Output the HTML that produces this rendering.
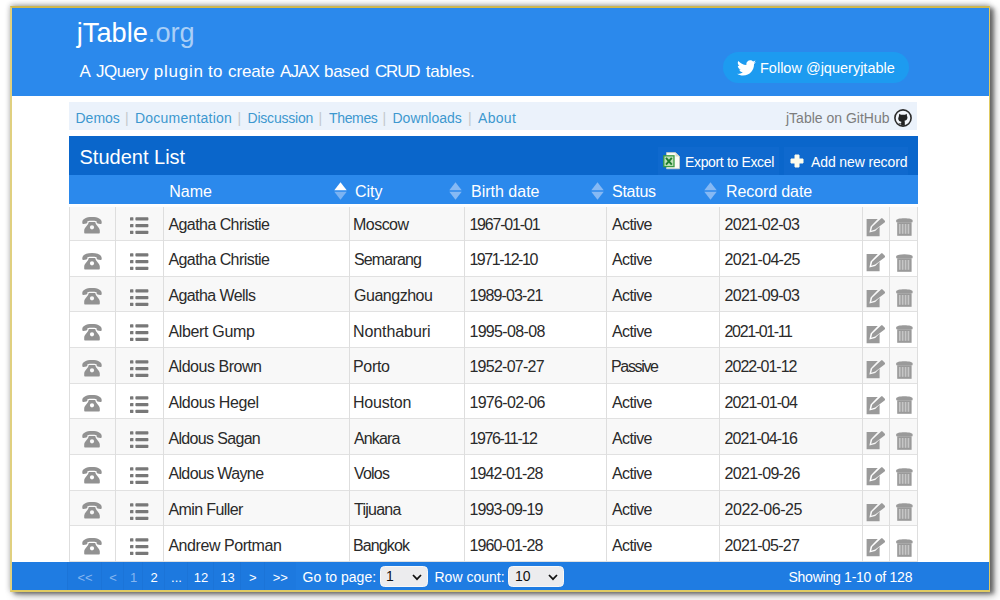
<!DOCTYPE html>
<html><head><meta charset="utf-8"><title>jTable.org</title>
<style>
*{box-sizing:border-box;margin:0;padding:0}
html,body{width:1000px;height:600px;overflow:hidden;background:#fff}
body{font-family:"Liberation Sans",sans-serif;position:relative}
#frame{position:absolute;left:10px;top:6px;width:980px;height:586px;border:2px solid #e0cb62;border-right-width:1px;border-top-color:#cdb750;border-left-color:#e0d080;background:#fff;box-shadow:4px 2px 4px rgba(0,0,0,.42),5px 4px 9px rgba(0,0,0,.25),0 -2px 5px rgba(0,0,0,.16),0 0 6px rgba(0,0,0,.14)}
#hdr{position:absolute;left:12px;top:8px;width:977px;height:88.1px;background:#2b89ec}
#logo{position:absolute;left:76.8px;top:16px;font-size:27.2px;line-height:34px;color:#fff;white-space:nowrap}
#logo span{color:#a9cff7}
#sub{position:absolute;left:0;top:61.3px;font-size:17px;line-height:22px;color:#fff;white-space:nowrap}
#sub span{position:absolute;top:0}
#tw{position:absolute;left:723px;top:52px;width:186px;height:31px;border-radius:16px;background:#1d9bf0}
#tw span{position:absolute;left:37px;top:6.8px;font-size:14.5px;line-height:18px;color:#fff;white-space:nowrap}
#tw svg{position:absolute;left:14px;top:8px}
#nav{position:absolute;left:69px;top:102px;width:848px;height:28.4px;background:#ebf2fb}
#nav a,#nav i,#nav b{position:absolute;top:7.1px;font-size:14px;line-height:18px;font-style:normal;font-weight:normal;white-space:nowrap}
#nav a{color:#3d98cf;text-decoration:none}
#nav i{color:#c4c8cc}
#nav b{color:#7d7d7d}
#tbl{position:absolute;left:69px;top:137px;width:848.5px;height:425px}
#tt{position:absolute;left:0;top:-.7px;width:100%;height:38.6px;background:#0a66cb}
#tt h1{position:absolute;left:10.5px;top:8.1px;font-size:20px;line-height:26px;font-weight:normal;color:#fff;white-space:nowrap}
.tb{position:absolute;top:10.7px;height:27.9px;background:#0f69ce}
.tb span{position:absolute;top:6.3px;font-size:14px;line-height:18px;color:#fff;white-space:nowrap}
#th{position:absolute;left:0;top:37.9px;width:100%;height:29.6px;background:#2b89ec}
#th span{position:absolute;top:6.8px;font-size:16px;line-height:20px;color:#fff;white-space:nowrap}
#th svg{position:absolute;top:6.8px}
.row{position:absolute;left:0;width:100%;height:35.65px;background:#fff;border-bottom:1px solid #e1e1e1}
.row.odd{background:#f8f8f8}
.c{position:absolute;top:9.3px;font-size:16px;line-height:20px;color:#2a2a2a;white-space:nowrap}
.c1{left:99px}.c2{left:284.5px}.c3{left:401px}.c4{left:542px}.c5{left:655px}
.ic{position:absolute}
.i1{left:13.2px;top:11.6px}.i2{left:61.2px;top:12px}.i3{left:796.7px;top:12.2px}.i4{left:826.6px;top:12.6px}
.vl{position:absolute;top:67.5px;width:1px;height:357px;background:#dedede}
#ft{position:absolute;left:12px;top:561.6px;width:977px;height:28.4px;background:#1f7ce2}
#ft span,#ft b{position:absolute;top:6.6px;font-size:14px;line-height:18px;font-weight:normal;color:#fff;white-space:nowrap}
#ft b{top:0;height:28.4px;background:#1d79df;box-shadow:-1px 0 0 #1b74d8;text-align:center;line-height:31.8px;font-size:13px;overflow:hidden}
#ft b.d{color:#86b6f0}
.sel{position:absolute;top:4.8px;height:21px;border-radius:4.5px;background:#ececee;border:1px solid #f8f8f8}
.sel em{position:absolute;left:6px;top:1px;font-style:normal;font-size:14px;line-height:17px;color:#111}
.sel svg{position:absolute;right:5px;top:6.2px}
</style></head><body>
<svg width="0" height="0" style="position:absolute"><defs>
<symbol id="ph" viewBox="0 0 20 17"><path fill="#929292" fill-rule="evenodd" d="M.3 5.200C.3 2 4 0 10 0s9.700 2 9.700 5.200V6c0 .8-.5 1.200-1.300 1l-2.800-.6c-.6-.2-1-.6-1-1.200v-1C13 3.800 11.600 3.700 10 3.700S7 3.800 5.400 4.200v1c0 .6-.4 1-1 1.200L1.600 7C.8 7.200.3 6.800.3 6zM6.800 5.100h6.400c.4 3 4.400 5.400 4.600 8.400v1.900c0 .6-.4 1-1 1H3.200c-.6 0-1-.4-1-1v-1.900c.2-3 4.200-5.400 4.600-8.400zM10 8.200a2.100 2.100 0 0 0 0 4.200 2.100 2.100 0 0 0 0-4.200z"/></symbol>
<symbol id="li" viewBox="0 0 19 17"><g fill="#787878"><rect x="0" y=".3" width="3.400" height="3.300" rx=".4"/><rect x="5.400" y=".3" width="13" height="3.300" rx=".8"/><rect x="0" y="7" width="3.400" height="3.300" rx=".4"/><rect x="5.400" y="7" width="13" height="3.300" rx=".8"/><rect x="0" y="13.700" width="3.400" height="3.300" rx=".4"/><rect x="5.400" y="13.700" width="13" height="3.300" rx=".8"/></g></symbol>
<symbol id="ed" viewBox="0 0 20 19"><path fill="#9a9a9a" d="M0.6 1L11.8 1 4.6 8.6 3.4 14.4 9.2 13 13.6 8.4 13.6 18.2 0.6 18.2Z"/><path fill="#9a9a9a" d="M14.8 0.8C15.4 0.2 16.2 0.2 16.8 0.8L18.6 2.6C19.2 3.2 19.2 4 18.6 4.6L9.2 11.6 5.2 12.8 6.2 8.8Z"/></symbol>
<symbol id="de" viewBox="0 0 18 18"><path fill="#9a9a9a" d="M.2 4.200V2.400C.2 1.200 3.700.3 8.400.3s8.200.9 8.200 2.100v1.800z"/><rect x="1.200" y="4.200" width="14.400" height="13.600" fill="#9a9a9a"/><g fill="#c6c6c6"><rect x="2.900" y="6" width="1.700" height="9.800"/><rect x="5.800" y="6" width="1.700" height="9.800"/><rect x="8.700" y="6" width="1.700" height="9.800"/><rect x="11.600" y="6" width="1.700" height="9.800"/></g></symbol>
<symbol id="so" viewBox="0 0 13 18"><path fill="#86b9f4" d="M6.500 0.300L12.700 8.300 0.300 8.300Z"/><path fill="#86b9f4" d="M6.500 17.700L12.700 9.700 0.300 9.700Z"/></symbol>
<symbol id="sa" viewBox="0 0 13 18"><path fill="#fff" d="M6.500 0.300L12.700 8.300 0.300 8.300Z"/><path fill="#7cb3f2" d="M6.500 17.700L12.700 9.700 0.300 9.700Z"/></symbol>
</defs></svg>
<div id="frame"></div>
<div id="hdr"></div>
<div id="logo">jTable<span>.org</span></div>
<div id="sub"><span style="left:79.6px;letter-spacing:-0.80px">A</span><span style="left:96.0px;letter-spacing:-0.46px">JQuery</span><span style="left:153.8px;letter-spacing:0.76px">plugin</span><span style="left:208.0px;letter-spacing:0.28px">to</span><span style="left:228.0px;letter-spacing:-0.12px">create</span><span style="left:280.0px;letter-spacing:-0.93px">AJAX</span><span style="left:324.0px;letter-spacing:-0.29px">based</span><span style="left:375.0px;letter-spacing:-1.21px">CRUD</span><span style="left:425.8px;letter-spacing:-0.19px">tables.</span></div>
<div id="tw"><svg width="19" height="16" viewBox="0 0 24 20"><path fill="#fff" d="M24 2.4c-.9.4-1.8.7-2.8.8 1-.6 1.800-1.600 2.200-2.700-1 .6-2 1-3.100 1.200C19.400.7 18.100.1 16.700.1c-2.700 0-4.900 2.200-4.900 4.900 0 .4 0 .8.100 1.100C7.700 5.900 4.100 4 1.700 1 1.200 1.800 1 2.600 1 3.500c0 1.700.9 3.200 2.200 4.100-.8 0-1.600-.2-2.200-.6v.1c0 2.400 1.700 4.400 3.900 4.800-.4.100-.8.200-1.300.2-.3 0-.6 0-.9-.1.600 2 2.400 3.400 4.600 3.400-1.700 1.300-3.800 2.100-6.100 2.100-.4 0-.8 0-1.200-.1 2.200 1.400 4.800 2.200 7.500 2.200 9.100 0 14-7.500 14-14v-.6c1-.7 1.800-1.600 2.500-2.600z"/></svg><span>Follow @jqueryjtable</span></div>
<div id="nav">
<a style="left:6.5px">Demos</a><i style="left:56px">|</i>
<a style="left:66px;letter-spacing:.22px">Documentation</a><i style="left:168.5px">|</i>
<a style="left:178.5px;letter-spacing:-.2px">Discussion</a><i style="left:249.500px">|</i>
<a style="left:260px;letter-spacing:-.35px">Themes</a><i style="left:313.500px">|</i>
<a style="left:323.5px">Downloads</a><i style="left:399px">|</i>
<a style="left:409px;letter-spacing:.3px">About</a>
<b style="left:717px">jTable on GitHub</b>
<svg style="position:absolute;left:825px;top:6.8px" width="18" height="18" viewBox="-9 -9 18 18"><circle r="8.100" fill="#f3f6fb" stroke="#2b2b2b" stroke-width="1.600"/><path fill="#222" d="M-3.700-4.300l1.600 1.100h4.200l1.600-1.100.3 2.400c.6.900.6 2 .1 3-.5 1.100-1.500 1.600-2.600 1.700l.3 1v3.600h-3.600v-1.200c-1.600.4-2.300-.4-2.700-1.400.9.800 1.800 1 2.700.4l.1-1.400c-1.200-.1-2.200-.6-2.700-1.700-.5-1-.5-2.100.100-3z"/></svg>
</div>
<div id="tbl">
<div id="tt"><h1>Student List</h1>
<div class="tb" style="left:588.5px;width:121px"><svg style="position:absolute;left:5px;top:5px" width="18" height="18" viewBox="0 0 18 18"><path fill="#fbfbf4" stroke="#d2d0bb" stroke-width=".7" d="M3.500.6h9l4 4v12.200H3.500z"/><path fill="#dcdac6" d="M12.500.6l4 4h-4z"/><rect x=".8" y="3.800" width="10.200" height="10.800" fill="#bfe0b8" stroke="#3a9a43" stroke-width="1.300"/><path stroke="#1f7d2f" stroke-width="1.900" d="M3 5.800l5.800 6.800M8.800 5.800L3 12.600"/></svg><span style="left:27.5px;letter-spacing:-.35px">Export to Excel</span></div>
<div class="tb" style="left:715px;width:123.500px"><svg style="position:absolute;left:6.300px;top:7.300px" width="14" height="14" viewBox="0 0 14 14"><path fill="#fdfcec" stroke="#fdfcec" stroke-width="1" stroke-linejoin="round" d="M5 1h4v4h4v4H9v4H5V9H1V5h4z"/></svg><span style="left:27px;letter-spacing:-.12px">Add new record</span></div>
</div>
<div id="th">
<span style="left:100.3px">Name</span><svg style="left:264.5px" width="13" height="18"><use href="#sa"/></svg>
<span style="left:286px">City</span><svg style="left:379.5px" width="13" height="18"><use href="#so"/></svg>
<span style="left:402px">Birth date</span><svg style="left:522px" width="13" height="18"><use href="#so"/></svg>
<span style="left:543px;letter-spacing:-.25px">Status</span><svg style="left:634.5px" width="13" height="18"><use href="#so"/></svg>
<span style="left:657px;letter-spacing:-.1px">Record date</span>
</div>
<div class="row odd" style="top:68.40px">
<svg class="ic i1" width="20" height="17"><use href="#ph"/></svg><svg class="ic i2" width="19" height="17"><use href="#li"/></svg>
<span class="c" style="left:99.4px;letter-spacing:-0.56px">Agatha Christie</span>
<span class="c" style="left:284.0px;letter-spacing:-0.53px">Moscow</span>
<span class="c" style="left:400.4px;letter-spacing:-1.19px">1967-01-01</span>
<span class="c" style="left:543.0px;letter-spacing:-0.63px">Active</span>
<span class="c" style="left:655.6px;letter-spacing:-0.74px">2021-02-03</span>
<svg class="ic i3" width="20" height="19"><use href="#ed"/></svg><svg class="ic i4" width="18" height="18"><use href="#de"/></svg>
</div>
<div class="row" style="top:104.05px">
<svg class="ic i1" width="20" height="17"><use href="#ph"/></svg><svg class="ic i2" width="19" height="17"><use href="#li"/></svg>
<span class="c" style="left:99.4px;letter-spacing:-0.56px">Agatha Christie</span>
<span class="c" style="left:285.0px;letter-spacing:-0.85px">Semarang</span>
<span class="c" style="left:400.4px;letter-spacing:-1.43px">1971-12-10</span>
<span class="c" style="left:543.0px;letter-spacing:-0.63px">Active</span>
<span class="c" style="left:655.6px;letter-spacing:-0.67px">2021-04-25</span>
<svg class="ic i3" width="20" height="19"><use href="#ed"/></svg><svg class="ic i4" width="18" height="18"><use href="#de"/></svg>
</div>
<div class="row odd" style="top:139.70px">
<svg class="ic i1" width="20" height="17"><use href="#ph"/></svg><svg class="ic i2" width="19" height="17"><use href="#li"/></svg>
<span class="c" style="left:99.4px;letter-spacing:-0.58px">Agatha Wells</span>
<span class="c" style="left:285.0px;letter-spacing:-0.48px">Guangzhou</span>
<span class="c" style="left:400.4px;letter-spacing:-0.86px">1989-03-21</span>
<span class="c" style="left:543.0px;letter-spacing:-0.63px">Active</span>
<span class="c" style="left:655.6px;letter-spacing:-0.74px">2021-09-03</span>
<svg class="ic i3" width="20" height="19"><use href="#ed"/></svg><svg class="ic i4" width="18" height="18"><use href="#de"/></svg>
</div>
<div class="row" style="top:175.35px">
<svg class="ic i1" width="20" height="17"><use href="#ph"/></svg><svg class="ic i2" width="19" height="17"><use href="#li"/></svg>
<span class="c" style="left:99.4px;letter-spacing:-0.33px">Albert Gump</span>
<span class="c" style="left:284.0px;letter-spacing:-0.08px">Nonthaburi</span>
<span class="c" style="left:400.4px;letter-spacing:-0.66px">1995-08-08</span>
<span class="c" style="left:543.0px;letter-spacing:-0.63px">Active</span>
<span class="c" style="left:655.6px;letter-spacing:-1.37px">2021-01-11</span>
<svg class="ic i3" width="20" height="19"><use href="#ed"/></svg><svg class="ic i4" width="18" height="18"><use href="#de"/></svg>
</div>
<div class="row odd" style="top:211.00px">
<svg class="ic i1" width="20" height="17"><use href="#ph"/></svg><svg class="ic i2" width="19" height="17"><use href="#li"/></svg>
<span class="c" style="left:99.4px;letter-spacing:-0.47px">Aldous Brown</span>
<span class="c" style="left:284.0px;letter-spacing:-0.34px">Porto</span>
<span class="c" style="left:400.4px;letter-spacing:-0.73px">1952-07-27</span>
<span class="c" style="left:542.0px;letter-spacing:-1.34px">Passive</span>
<span class="c" style="left:655.6px;letter-spacing:-1.00px">2022-01-12</span>
<svg class="ic i3" width="20" height="19"><use href="#ed"/></svg><svg class="ic i4" width="18" height="18"><use href="#de"/></svg>
</div>
<div class="row" style="top:246.65px">
<svg class="ic i1" width="20" height="17"><use href="#ph"/></svg><svg class="ic i2" width="19" height="17"><use href="#li"/></svg>
<span class="c" style="left:99.4px;letter-spacing:-0.42px">Aldous Hegel</span>
<span class="c" style="left:284.0px;letter-spacing:-0.22px">Houston</span>
<span class="c" style="left:400.4px;letter-spacing:-0.66px">1976-02-06</span>
<span class="c" style="left:543.0px;letter-spacing:-0.63px">Active</span>
<span class="c" style="left:655.6px;letter-spacing:-0.94px">2021-01-04</span>
<svg class="ic i3" width="20" height="19"><use href="#ed"/></svg><svg class="ic i4" width="18" height="18"><use href="#de"/></svg>
</div>
<div class="row odd" style="top:282.30px">
<svg class="ic i1" width="20" height="17"><use href="#ph"/></svg><svg class="ic i2" width="19" height="17"><use href="#li"/></svg>
<span class="c" style="left:99.4px;letter-spacing:-0.66px">Aldous Sagan</span>
<span class="c" style="left:285.0px;letter-spacing:-0.86px">Ankara</span>
<span class="c" style="left:400.4px;letter-spacing:-1.36px">1976-11-12</span>
<span class="c" style="left:543.0px;letter-spacing:-0.63px">Active</span>
<span class="c" style="left:655.6px;letter-spacing:-0.94px">2021-04-16</span>
<svg class="ic i3" width="20" height="19"><use href="#ed"/></svg><svg class="ic i4" width="18" height="18"><use href="#de"/></svg>
</div>
<div class="row" style="top:317.95px">
<svg class="ic i1" width="20" height="17"><use href="#ph"/></svg><svg class="ic i2" width="19" height="17"><use href="#li"/></svg>
<span class="c" style="left:99.4px;letter-spacing:-0.63px">Aldous Wayne</span>
<span class="c" style="left:285.0px;letter-spacing:-0.79px">Volos</span>
<span class="c" style="left:400.4px;letter-spacing:-0.86px">1942-01-28</span>
<span class="c" style="left:543.0px;letter-spacing:-0.63px">Active</span>
<span class="c" style="left:655.6px;letter-spacing:-0.67px">2021-09-26</span>
<svg class="ic i3" width="20" height="19"><use href="#ed"/></svg><svg class="ic i4" width="18" height="18"><use href="#de"/></svg>
</div>
<div class="row odd" style="top:353.60px">
<svg class="ic i1" width="20" height="17"><use href="#ph"/></svg><svg class="ic i2" width="19" height="17"><use href="#li"/></svg>
<span class="c" style="left:99.4px;letter-spacing:-0.60px">Amin Fuller</span>
<span class="c" style="left:285.0px;letter-spacing:-0.76px">Tijuana</span>
<span class="c" style="left:400.4px;letter-spacing:-0.86px">1993-09-19</span>
<span class="c" style="left:543.0px;letter-spacing:-0.63px">Active</span>
<span class="c" style="left:655.6px;letter-spacing:-0.44px">2022-06-25</span>
<svg class="ic i3" width="20" height="19"><use href="#ed"/></svg><svg class="ic i4" width="18" height="18"><use href="#de"/></svg>
</div>
<div class="row" style="top:389.25px">
<svg class="ic i1" width="20" height="17"><use href="#ph"/></svg><svg class="ic i2" width="19" height="17"><use href="#li"/></svg>
<span class="c" style="left:99.4px;letter-spacing:-0.44px">Andrew Portman</span>
<span class="c" style="left:284.0px;letter-spacing:-0.88px">Bangkok</span>
<span class="c" style="left:400.4px;letter-spacing:-0.86px">1960-01-28</span>
<span class="c" style="left:543.0px;letter-spacing:-0.63px">Active</span>
<span class="c" style="left:655.6px;letter-spacing:-0.74px">2021-05-27</span>
<svg class="ic i3" width="20" height="19"><use href="#ed"/></svg><svg class="ic i4" width="18" height="18"><use href="#de"/></svg>
</div>
<div style="position:absolute;left:0;top:67.5px;width:100%;height:2px;background:#fdfeff;z-index:2"></div><div class="vl" style="left:46px"></div><div class="vl" style="left:94px"></div><div class="vl" style="left:279.500px"></div><div class="vl" style="left:395px"></div><div class="vl" style="left:536.500px"></div><div class="vl" style="left:649.500px"></div><div class="vl" style="left:792.6px"></div><div class="vl" style="left:820.4px"></div><div class="vl" style="left:847.500px"></div><div class="vl" style="left:0"></div>
</div>
<div id="ft">
<b class="d" style="left:56px;width:34px">&lt;&lt;</b><b class="d" style="left:90px;width:22px">&lt;</b><b class="d" style="left:112px;width:19px">1</b><b style="left:131px;width:22px">2</b><b style="left:153px;width:23px">...</b><b style="left:176px;width:26px">12</b><b style="left:202px;width:27px">13</b><b style="left:229px;width:23.5px">&gt;</b><b style="left:252.5px;width:31.5px">&gt;&gt;</b>
<span style="left:290.5px;letter-spacing:.05px">Go to page:</span>
<div class="sel" style="left:368px;width:48.4px"><em style="left:5px">1</em><svg width="10" height="7" viewBox="0 0 10 7"><path fill="none" stroke="#111" stroke-width="1.700" d="M1 1l4 4.200L9 1"/></svg></div>
<span style="left:422.5px">Row count:</span>
<div class="sel" style="left:496px;width:56.4px"><em>10</em><svg width="10" height="7" viewBox="0 0 10 7"><path fill="none" stroke="#111" stroke-width="1.700" d="M1 1l4 4.200L9 1"/></svg></div>
<span style="left:776.5px;letter-spacing:-.25px">Showing 1-10 of 128</span>
</div>
</body></html>
